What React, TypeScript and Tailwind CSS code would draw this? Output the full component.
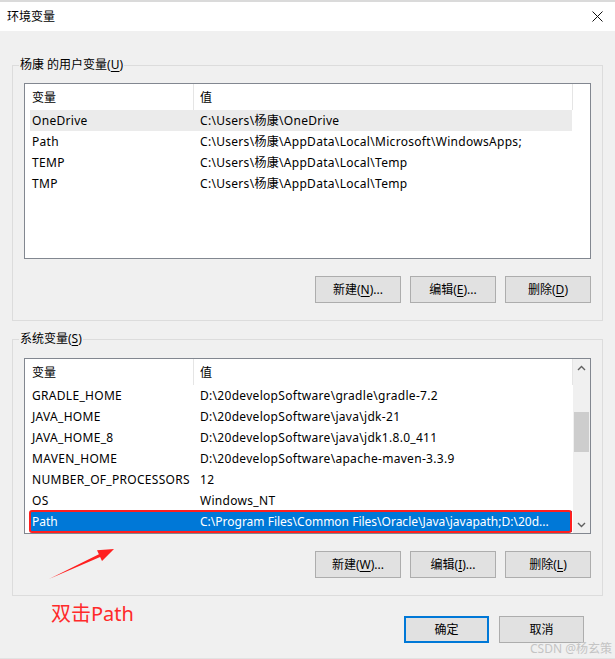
import React from "react";

type Row = { name: string; value: string };

const userRows: Row[] = [
  { name: "OneDrive", value: "C:\\Users\\杨康\\OneDrive" },
  { name: "Path", value: "C:\\Users\\杨康\\AppData\\Local\\Microsoft\\WindowsApps;" },
  { name: "TEMP", value: "C:\\Users\\杨康\\AppData\\Local\\Temp" },
  { name: "TMP", value: "C:\\Users\\杨康\\AppData\\Local\\Temp" },
];

const sysRows: Row[] = [
  { name: "GRADLE_HOME", value: "D:\\20developSoftware\\gradle\\gradle-7.2" },
  { name: "JAVA_HOME", value: "D:\\20developSoftware\\java\\jdk-21" },
  { name: "JAVA_HOME_8", value: "D:\\20developSoftware\\java\\jdk1.8.0_411" },
  { name: "MAVEN_HOME", value: "D:\\20developSoftware\\apache-maven-3.3.9" },
  { name: "NUMBER_OF_PROCESSORS", value: "12" },
  { name: "OS", value: "Windows_NT" },
  { name: "Path", value: "C:\\Program Files\\Common Files\\Oracle\\Java\\javapath;D:\\20d..." },
];

function Chevron({ up }: { up: boolean }) {
  return (
    <svg width="9" height="6" viewBox="0 0 9 6">
      <path
        d={up ? "M1 5 L4.5 1.5 L8 5" : "M1 1 L4.5 4.5 L8 1"}
        fill="none"
        stroke="#606060"
        strokeWidth="1.4"
      />
    </svg>
  );
}

function ListBox({
  rows,
  scroll,
  hover,
  selected,
}: {
  rows: Row[];
  scroll?: boolean;
  hover?: number;
  selected?: number;
}) {
  return (
    <div className="w-[567px] h-[176px] border border-[#828790] bg-white flex overflow-hidden">
      <div className="flex-1 pl-[5px] flex flex-col">
        <div className="flex h-[26px] shrink-0">
          <div className="w-[164px] border-r border-[#e5e5e5] pl-[2px] pt-[2px] flex items-center">变量</div>
          <div className="w-[379px] border-r border-[#e5e5e5] pl-[6px] pt-[2px] flex items-center">值</div>
        </div>
        {rows.map((r, i) => {
          const isSel = i === selected;
          const isHover = i === hover;
          return (
            <div
              key={r.name + i}
              className={
                "relative flex h-[21px] w-[542px] shrink-0 items-center whitespace-nowrap " +
                (isSel
                  ? "bg-[#0078d7] text-white"
                  : isHover
                  ? "bg-[#ebebeb] tracking-[0.3px]"
                  : "tracking-[0.3px]")
              }
            >
              <div className="w-[166px] pl-[2px] overflow-hidden">{r.name}</div>
              <div className="flex-1 pl-[4px] overflow-hidden">{r.value}</div>
              {isSel && (
                <div className="absolute -top-[1px] -bottom-[1px] -left-[1px] right-0 border-2 border-[#ff1f1f] rounded-[3px]" />
              )}
            </div>
          );
        })}
      </div>
      {scroll && (
        <div className="w-[17px] bg-[#f0f0f0] flex flex-col shrink-0">
          <div className="h-[17px] flex items-center justify-center">
            <Chevron up />
          </div>
          <div className="flex-1 flex flex-col">
            <div className="h-[36px]" />
            <div className="h-[40px] mx-[1px] bg-[#cdcdcd]" />
          </div>
          <div className="h-[17px] flex items-center justify-center">
            <Chevron up={false} />
          </div>
        </div>
      )}
    </div>
  );
}

function Btn({ children, primary, w = "w-[86px]" }: { children: React.ReactNode; primary?: boolean; w?: string }) {
  return (
    <div
      className={
        w +
        " h-[27px] flex items-center justify-center bg-[#e1e1e1] " +
        (primary ? "border-2 border-[#0078d7]" : "border border-[#adadad]")
      }
    >
      {children}
    </div>
  );
}

function U({ c }: { c: string }) {
  return <span className="underline underline-offset-[2px]">{c}</span>;
}

function Group({ label, children, pt }: { label: React.ReactNode; children: React.ReactNode; pt: string }) {
  return (
    <div className={"relative ml-[12px] w-[591px] border border-[#dcdcdc] px-[11px] pb-[17px] " + pt}>
      <div className="absolute -top-[9px] left-[6px] bg-[#f0f0f0] px-[1px] leading-[16px]">{label}</div>
      {children}
    </div>
  );
}

export default function App() {
  return (
    <div className="relative w-[615px] h-[659px] bg-[#f0f0f0] overflow-hidden flex flex-col text-[12px] leading-[16px] text-black font-['Noto_Sans','Noto_Sans_CJK_SC',sans-serif]">
      <div className="h-[2px] bg-[#dadada] shrink-0" />
      <div className="h-[29px] bg-white flex items-center justify-between pl-[7px] pr-[12px] shrink-0">
        <span>环境变量</span>
        <svg width="11" height="11" viewBox="0 0 11 11">
          <path d="M0.5 0.5 L10.5 10.5 M10.5 0.5 L0.5 10.5" stroke="#111" strokeWidth="1" />
        </svg>
      </div>

      <div className="mt-[34px]">
        <Group
          pt="pt-[17px]"
          label={
            <span>
              杨康 的用户变量(<U c="U" />)
            </span>
          }
        >
          <ListBox rows={userRows} hover={0} />
          <div className="mt-[17px] flex justify-end gap-[9px]">
            <Btn>
              新建(<U c="N" />)...
            </Btn>
            <Btn>
              编辑(<U c="E" />)...
            </Btn>
            <Btn>
              删除(<U c="D" />)
            </Btn>
          </div>
        </Group>
      </div>

      <div className="mt-[18px]">
        <Group
          pt="pt-[18px]"
          label={
            <span>
              系统变量(<U c="S" />)
            </span>
          }
        >
          <ListBox rows={sysRows} scroll selected={6} />
          <div className="mt-[17px] flex justify-end gap-[9px]">
            <Btn>
              新建(<U c="W" />)...
            </Btn>
            <Btn>
              编辑(<U c="I" />)...
            </Btn>
            <Btn>
              删除(<U c="L" />)
            </Btn>
          </div>
        </Group>
      </div>

      <div className="mt-[20px] flex items-start pl-[51px] pr-[31px]">
        <span className="text-[20px] leading-[24px] text-[#ff2a2a] -mt-[14px]">双击Path</span>
        <div className="ml-auto flex gap-[10px]">
          <Btn primary w="w-[85px]">确定</Btn>
          <Btn w="w-[85px]">取消</Btn>
        </div>
      </div>

      <div className="mt-auto h-[1px] bg-[#e2e2e2] shrink-0" />

      <svg className="absolute left-[40px] top-[540px]" width="85" height="45" viewBox="0 0 85 45">
        <polygon points="9,39 60.1,17.1 62,21.1 74,9 57,10.3 58.9,14.3" fill="#ff2020" />
      </svg>

      <div className="absolute right-[3px] bottom-[3px] text-[12px] leading-[14px] text-[#c4c4c4]">
        CSDN @杨玄策
      </div>
    </div>
  );
}
